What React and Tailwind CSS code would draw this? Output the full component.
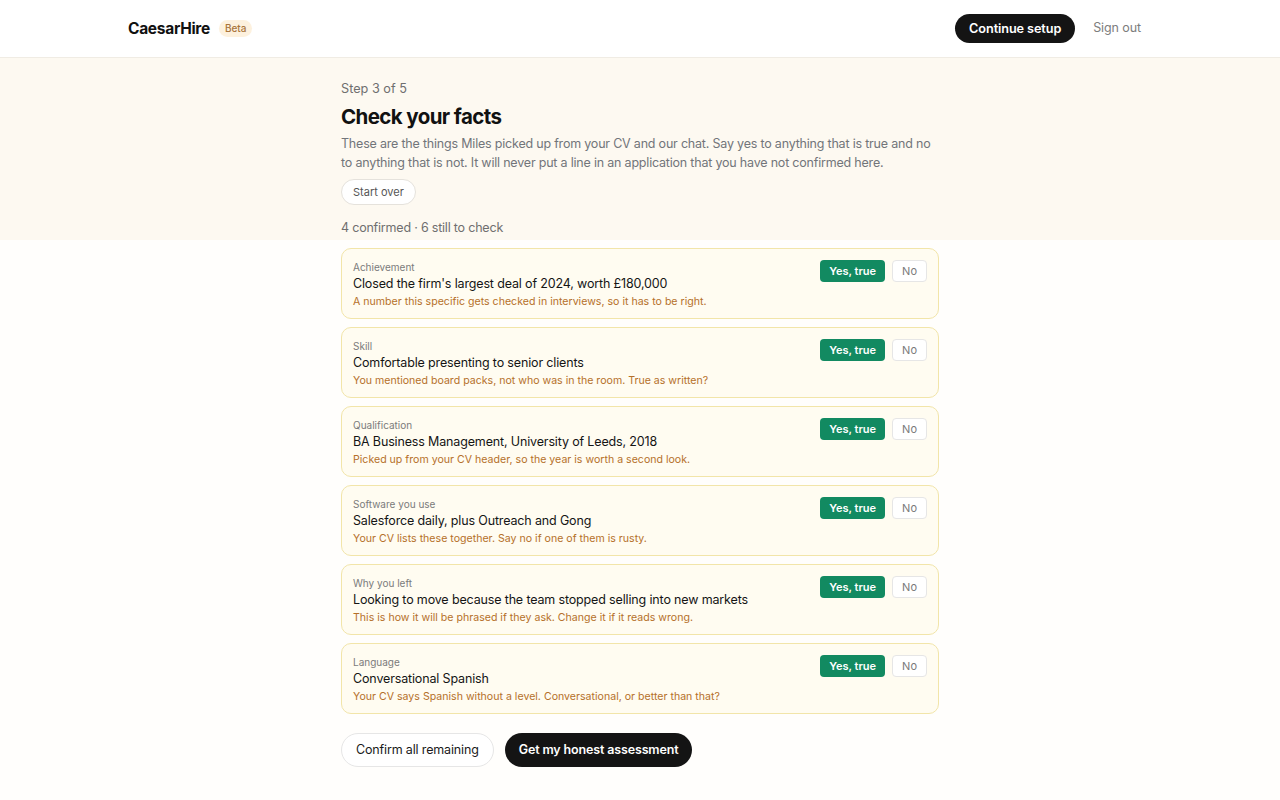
import React, { useState } from 'react'

const facts = [
  {
    label: 'Achievement',
    text: "Closed the firm's largest deal of 2024, worth £180,000",
    note: 'A number this specific gets checked in interviews, so it has to be right.',
  },
  {
    label: 'Skill',
    text: 'Comfortable presenting to senior clients',
    note: 'You mentioned board packs, not who was in the room. True as written?',
  },
  {
    label: 'Qualification',
    text: 'BA Business Management, University of Leeds, 2018',
    note: 'Picked up from your CV header, so the year is worth a second look.',
  },
  {
    label: 'Software you use',
    text: 'Salesforce daily, plus Outreach and Gong',
    note: 'Your CV lists these together. Say no if one of them is rusty.',
  },
  {
    label: 'Why you left',
    text: 'Looking to move because the team stopped selling into new markets',
    note: 'This is how it will be phrased if they ask. Change it if it reads wrong.',
  },
  {
    label: 'Language',
    text: 'Conversational Spanish',
    note: 'Your CV says Spanish without a level. Conversational, or better than that?',
  },
]

function FactCard({ fact }) {
  return (
    <div className="flex items-start justify-between rounded-[10px] border border-[#f2e5a9] bg-[#fffcf1] pl-[11px] pr-[11px] pt-[11px] pb-[9px]">
      <div className="flex flex-col">
        <span className="text-[10px] leading-[14px] text-[#7b7b7b]">{fact.label}</span>
        <span className="mt-[1px] text-[12.5px] leading-[18px] tracking-[-0.15px] text-[#151515]">{fact.text}</span>
        <span className="mt-[1px] text-[10.6px] leading-[15px] text-[#b5702a]">{fact.note}</span>
      </div>
      <div className="flex items-center gap-[7px]">
        <button className="h-[22px] rounded-[4px] bg-[#128a61] px-[9px] text-[11px] font-semibold text-white">
          Yes, true
        </button>
        <button className="h-[22px] rounded-[4px] border border-[#e6e6e6] bg-white px-[9px] text-[11px] text-[#7a7a7a]">
          No
        </button>
      </div>
    </div>
  )
}

export default function App() {
  const [list] = useState(facts)

  return (
    <div className="min-h-screen bg-[#fffefc] font-['Inter',sans-serif] antialiased">
      <header className="border-b border-[#f0ece4] bg-white">
        <div className="mx-auto flex h-[57px] w-[1024px] items-center justify-between">
          <div className="flex items-center gap-[9px]">
            <span className="text-[15.5px] font-bold tracking-[-0.3px] text-[#111]">CaesarHire</span>
            <span className="rounded-full bg-[#fdf1de] px-[6px] py-[1px] text-[10px] font-medium text-[#a9753c]">Beta</span>
          </div>
          <div className="flex items-center gap-[18px] pr-[11px]">
            <button className="h-[29px] rounded-full bg-[#141414] px-[14px] text-[12.7px] font-semibold tracking-[-0.1px] text-white">
              Continue setup
            </button>
            <button className="text-[12.5px] tracking-[-0.1px] text-[#7d7d7d]">Sign out</button>
          </div>
        </div>
      </header>

      <main className="bg-[linear-gradient(to_bottom,#fdf9f1_182px,#fffefc_182px)] pb-10">
        <div className="mx-auto w-[598px] pt-[23px]">
          <p className="text-[12.7px] leading-[16px] text-[#6f6f6f]">Step 3 of 5</p>
          <h1 className="mt-[8px] text-[20.5px] font-bold leading-[24px] tracking-[-0.6px] text-[#111]">
            Check your facts
          </h1>
          <p className="mt-[5px] text-[12.5px] leading-[19px] tracking-[-0.2px] text-[#72757a]">
            These are the things Miles picked up from your CV and our chat. Say yes to anything that is true and no
            to anything that is not. It will never put a line in an application that you have not confirmed here.
          </p>
          <button className="mt-[7px] h-[26px] rounded-full border border-[#e5e2dc] bg-white px-[11px] text-[11px] text-[#555]">
            Start over
          </button>
          <p className="mt-[15px] text-[12.5px] leading-[16px] tracking-[-0.2px] text-[#6f6f6f]">4 confirmed · 6 still to check</p>

          <div className="mt-[12px] flex flex-col gap-[8px]">
            {list.map((f) => (
              <FactCard key={f.label} fact={f} />
            ))}
          </div>

          <div className="mt-[19px] flex items-center gap-[11px]">
            <button className="h-[34px] rounded-full border border-[#e6e6e6] bg-white px-[14px] text-[12.5px] tracking-[-0.15px] text-[#1a1a1a]">
              Confirm all remaining
            </button>
            <button className="h-[34px] rounded-full bg-[#141414] px-[14px] text-[12.5px] font-semibold tracking-[-0.15px] text-white">
              Get my honest assessment
            </button>
          </div>
        </div>
      </main>
    </div>
  )
}
